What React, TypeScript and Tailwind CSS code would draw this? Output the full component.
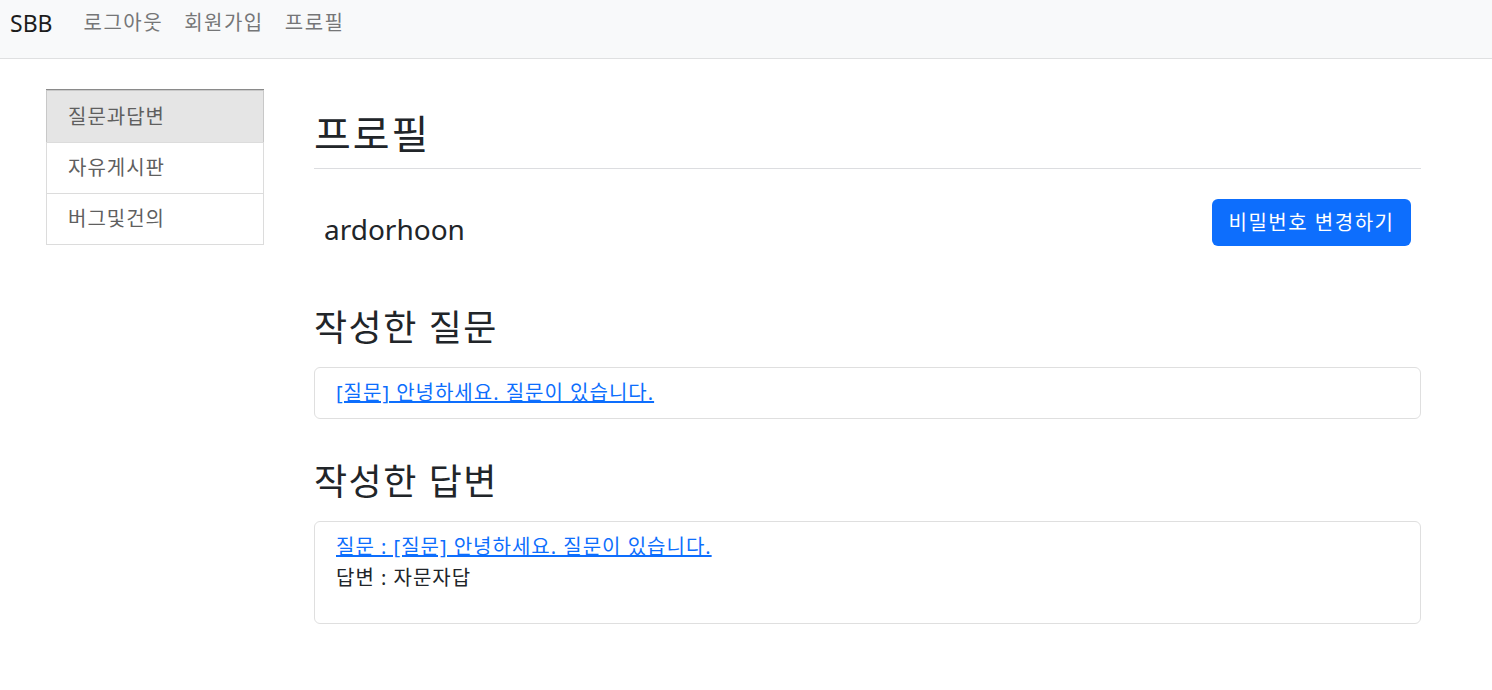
const font = { fontFamily: '"Noto Sans", "Noto Sans CJK KR", sans-serif' };

const sideItems = ["질문과답변", "자유게시판", "버그및건의"];

function NavBar() {
  return (
    <nav className="flex h-[59px] items-center border-b border-[#dfe0e1] bg-[#f8f9fa] pb-[12px] pl-[10px]">
      <a className="mr-[31px] text-[23px] text-[#1c1c1c]">SBB</a>
      <div className="flex gap-[21px] text-[20px] tracking-[1.5px] text-[#757677]">
        <a>로그아웃</a>
        <a>회원가입</a>
        <a>프로필</a>
      </div>
    </nav>
  );
}

function SideMenu() {
  return (
    <div className="mt-[30px] w-[218px] shrink-0 border-t border-[#8a8a8a]">
      {sideItems.map((item, i) => (
        <div
          key={item}
          className={
            i === 0
              ? "flex h-[53px] items-center border border-[#c8c8c8] bg-[#e5e5e5] pl-[21px] text-[20px] tracking-[1px] text-[#5f5f5f]"
              : "-mt-px flex h-[52px] items-center border border-[#dcdcdc] bg-white pl-[21px] text-[20px] tracking-[1px] text-[#5f5f5f]"
          }
        >
          {item}
        </div>
      ))}
    </div>
  );
}

export default function App() {
  return (
    <div className="min-h-screen bg-white text-[#212529]" style={font}>
      <NavBar />
      <div className="flex pl-[46px]">
        <SideMenu />
        <main className="ml-[50px] mt-[53px] w-[1107px]">
          <h2 className="border-b border-[#dcdde0] pb-[12px] text-[40px] leading-[44px] tracking-[2px]">
            프로필
          </h2>
          <div className="mt-[30px] flex items-start justify-between">
            <span className="pl-[10px] pt-[15px] text-[28px] leading-[30px]">ardorhoon</span>
            <button className="mr-[10px] h-[47px] w-[199px] rounded-[6px] bg-[#0d6efd] text-[20px] tracking-[1.5px] text-white">
              비밀번호 변경하기
            </button>
          </div>
          <h3 className="mt-[62px] text-[36px] leading-[40px] tracking-[1.5px]">작성한 질문</h3>
          <div className="mt-[19px] flex h-[52px] items-center rounded-[6px] border border-[#dfdfdf] px-[21px]">
            <a className="text-[20px] tracking-[1px] text-[#0d6efd] underline">
              [질문] 안녕하세요. 질문이 있습니다.
            </a>
          </div>
          <h3 className="mt-[43px] text-[36px] leading-[40px] tracking-[1.5px]">작성한 답변</h3>
          <div className="mt-[19px] h-[103px] rounded-[6px] border border-[#dfdfdf] px-[21px] pt-[9px] text-[20px] leading-[31px] tracking-[1px]">
            <a className="text-[#0d6efd] underline">
              질문 : [질문] 안녕하세요. 질문이 있습니다.
            </a>
            <div>답변 : 자문자답</div>
          </div>
        </main>
      </div>
    </div>
  );
}
